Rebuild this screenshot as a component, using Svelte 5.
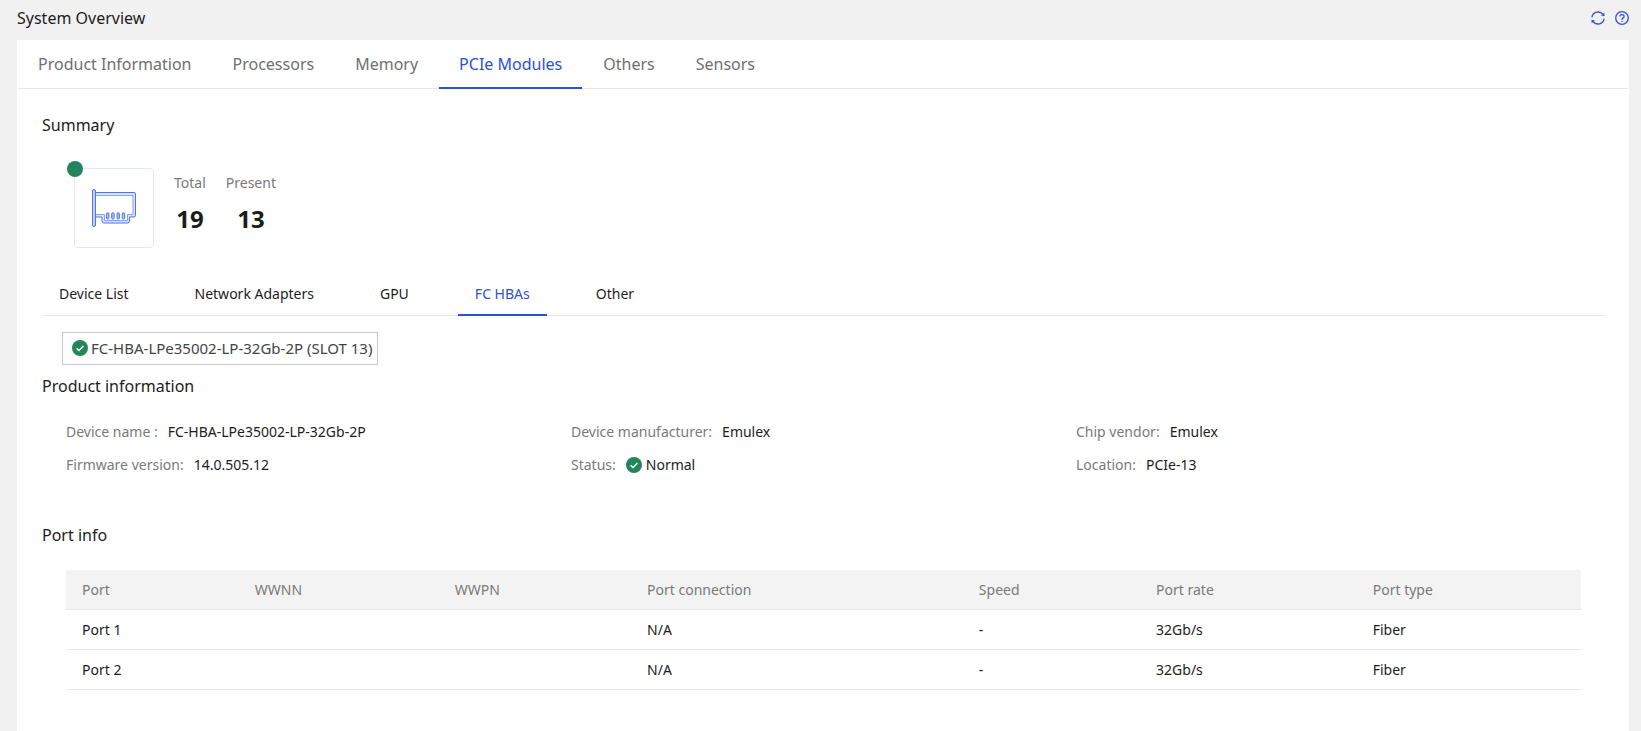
<script lang="ts">
  let mainTab = $state("PCIe Modules");
  let subTab = $state("FC HBAs");

  const mainTabs = ["Product Information", "Processors", "Memory", "PCIe Modules", "Others", "Sensors"];
  const subTabs = ["Device List", "Network Adapters", "GPU", "FC HBAs", "Other"];

  const info = [
    { label: "Device name :", value: "FC-HBA-LPe35002-LP-32Gb-2P" },
    { label: "Device manufacturer:", value: "Emulex" },
    { label: "Chip vendor:", value: "Emulex" },
    { label: "Firmware version:", value: "14.0.505.12" },
    { label: "Status:", value: "Normal", ok: true },
    { label: "Location:", value: "PCIe-13" },
  ];

  const columns = [
    { name: "Port", width: 11.4 },
    { name: "WWNN", width: 13.2 },
    { name: "WWPN", width: 12.7 },
    { name: "Port connection", width: 21.9 },
    { name: "Speed", width: 11.7 },
    { name: "Port rate", width: 14.3 },
    { name: "Port type", width: 14.8 },
  ];
  const ports = [
    ["Port 1", "", "", "N/A", "-", "32Gb/s", "Fiber"],
    ["Port 2", "", "", "N/A", "-", "32Gb/s", "Fiber"],
  ];
</script>

{#snippet check()}
  <svg class="check" viewBox="0 0 16 16" width="16" height="16" aria-hidden="true">
    <circle cx="8" cy="8" r="8" fill="#24855c" />
    <path d="M4.6 8.2 7 10.5 11.4 6" fill="none" stroke="#fff" stroke-width="1.3" />
  </svg>
{/snippet}

<div class="page">
  <header>
    <h1>System Overview</h1>
    <div class="actions">
      <button aria-label="Refresh">
        <svg viewBox="0 0 14 14" width="14" height="14" fill="none" stroke="#2f54d8" stroke-width="1.3">
          <path d="M.9 6.4A6.2 6.2 0 0 1 12 3.5M13.1 7.6A6.2 6.2 0 0 1 2 10.5" />
          <path d="M10 4.5 13.6 5.2 13.3 1.8ZM4 9.5.4 8.8.7 12.2Z" fill="#2f54d8" stroke="none" />
        </svg>
      </button>
      <button aria-label="Help">
        <svg viewBox="0 0 14 14" width="14" height="14" fill="none" stroke="#2f54d8" stroke-width="1.3">
          <circle cx="7" cy="7" r="6.3" />
          <path d="M4.9 5.6C4.9 4.3 5.8 3.6 7 3.6s2.1.8 2.1 1.8C9.1 6.9 7 6.9 7 8.7M7 9.8v1.3" />
        </svg>
      </button>
    </div>
  </header>

  <main>
    <nav class="tabs">
      {#each mainTabs as tab}
        <button class:active={tab === mainTab} onclick={() => (mainTab = tab)}>{tab}</button>
      {/each}
    </nav>

    <div class="content">
      <h2>Summary</h2>
      <div class="summary">
        <div class="card">
          <span class="dot"></span>
          <svg viewBox="0 0 46 40" width="46" height="40" fill="none" stroke="#5473e0" stroke-width="1">
            <path
              d="M4.5 4.5H43a1.5 1.5 0 0 1 1.5 1.5v21.5a1.5 1.5 0 0 1-1.5 1.5h-4.5v4a2 2 0 0 1-2 2H13a2 2 0 0 1-2-2v-4H4.5Z"
              fill="#dbe2fb"
            />
            <path d="M4.5 7.5H42V26.5H36.5V32.5H13.5V26.5H4.5Z" fill="#fff" stroke="#8ca1ec" />
            <rect x="1.5" y="1.5" width="3" height="37" rx="1.5" fill="#c9d4f8" />
            <g fill="#b3c2f5">
              <rect x="15.5" y="24.8" width="2.4" height="6.2" rx="1" />
              <rect x="20.7" y="24.8" width="2.4" height="6.2" rx="1" />
              <rect x="26" y="24.8" width="2.4" height="6.2" rx="1" />
              <rect x="31.2" y="24.8" width="2.4" height="6.2" rx="1" />
            </g>
          </svg>
        </div>
        <dl>
          <div>
            <dt>Total</dt>
            <dd>19</dd>
          </div>
          <div>
            <dt>Present</dt>
            <dd>13</dd>
          </div>
        </dl>
      </div>

      <nav class="subtabs">
        {#each subTabs as tab}
          <button class:active={tab === subTab} onclick={() => (subTab = tab)}>{tab}</button>
        {/each}
      </nav>

      <button class="device">{@render check()}FC-HBA-LPe35002-LP-32Gb-2P (SLOT 13)</button>

      <h2>Product information</h2>
      <dl class="info">
        {#each info as item}
          <div>
            <dt>{item.label}</dt>
            <dd>
              {#if item.ok}{@render check()}{/if}{item.value}
            </dd>
          </div>
        {/each}
      </dl>

      <h2>Port info</h2>
      <table>
        <colgroup>
          {#each columns as col}
            <col style="width: {col.width}%" />
          {/each}
        </colgroup>
        <thead>
          <tr>
            {#each columns as col}
              <th>{col.name}</th>
            {/each}
          </tr>
        </thead>
        <tbody>
          {#each ports as row}
            <tr>
              {#each row as cell}
                <td>{cell}</td>
              {/each}
            </tr>
          {/each}
        </tbody>
      </table>
    </div>
  </main>
</div>

<style>
  :global(body) {
    background: #f1f1f1;
  }

  .page {
    display: flex;
    flex-direction: column;
    min-height: 100vh;
    padding: 0 12px 0 17px;
    box-sizing: border-box;
    font: 14px/20px "Noto Sans", "Open Sans", sans-serif;
    color: #1c1c1c;
  }

  button {
    font: inherit;
    color: inherit;
    background: none;
    border: 0;
    padding: 0;
    cursor: pointer;
  }

  h1,
  h2 {
    margin: 0;
    font-size: 16px;
    line-height: 24px;
    font-weight: 400;
  }

  dl,
  dd {
    margin: 0;
  }

  header {
    display: flex;
    justify-content: space-between;
    align-items: center;
    height: 36px;
    padding-bottom: 4px;
  }

  .actions {
    display: flex;
    gap: 10px;
  }

  .actions svg {
    display: block;
  }

  main {
    flex: 1;
    background: #fff;
  }

  .tabs {
    display: flex;
    gap: 1px;
    margin: 0 1px;
    height: 48px;
    border-bottom: 1px solid #e8e8e8;
  }

  .tabs button {
    padding: 0 20px;
    margin-bottom: -1px;
    border-bottom: 2px solid transparent;
    font-size: 16px;
    color: #707070;
  }

  .tabs .active,
  .subtabs .active {
    color: #2b51d6;
    border-color: #2b51d6;
  }

  .content {
    padding: 24px 24px 40px 25px;
  }

  .summary {
    display: flex;
    gap: 20px;
    padding: 31px 32px 0;
  }

  .card {
    position: relative;
    display: grid;
    place-items: center;
    width: 78px;
    height: 78px;
    border: 1px solid #e2e7fa;
    border-radius: 4px;
  }

  .dot {
    position: absolute;
    top: -8px;
    left: -8px;
    width: 16px;
    height: 16px;
    border-radius: 50%;
    background: #24855c;
  }

  .summary dl {
    display: flex;
    gap: 20px;
    padding-top: 5px;
    text-align: center;
  }

  dt,
  th {
    color: #7a7a7a;
  }

  .summary dd {
    margin-top: 10px;
    font-size: 24px;
    line-height: 32px;
    font-weight: 700;
  }

  .subtabs {
    display: flex;
    gap: 32px;
    height: 43px;
    margin-top: 24px;
    border-bottom: 1px solid #e8e8e8;
  }

  .subtabs button {
    padding: 2px 17px 0;
    margin-bottom: -1px;
    border-bottom: 2px solid transparent;
  }

  .check {
    flex: none;
  }

  .device {
    display: flex;
    align-items: center;
    gap: 3px;
    height: 33px;
    margin: 16px 20px 9px;
    padding: 0 5px 1px 9px;
    border: 1px solid #c6c6c6;
    font-size: 15px;
    color: #444;
  }

  .info {
    display: grid;
    grid-template-columns: repeat(3, 1fr);
    row-gap: 13px;
    padding: 24px 24px 48px;
  }

  .info div {
    display: flex;
    gap: 10px;
  }

  .info dd {
    display: flex;
    align-items: center;
    gap: 4px;
  }

  table {
    width: calc(100% - 48px);
    margin: 23px 24px 0;
    table-layout: fixed;
    border-collapse: collapse;
  }

  th,
  td {
    height: 39px;
    padding: 0 16px;
    border-bottom: 1px solid #e8e8e8;
    text-align: left;
    font-weight: 400;
  }

  th {
    background: #f3f3f3;
  }
</style>
